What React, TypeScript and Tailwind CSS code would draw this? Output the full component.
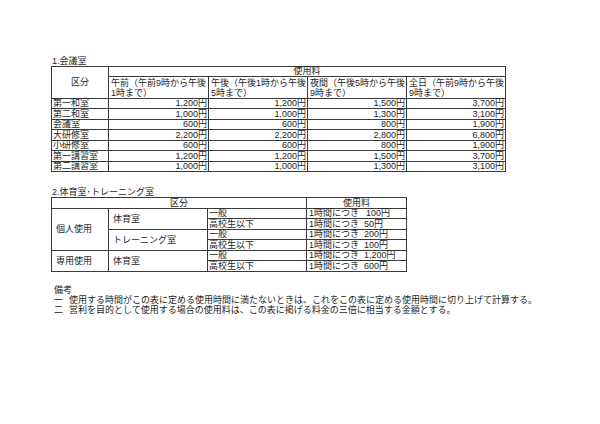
import React from "react";

const rows1 = [
  ["第一和室", "1,200円", "1,200円", "1,500円", "3,700円"],
  ["第二和室", "1,000円", "1,000円", "1,300円", "3,100円"],
  ["会議室", "600円", "600円", "800円", "1,900円"],
  ["大研修室", "2,200円", "2,200円", "2,800円", "6,800円"],
  ["小研修室", "600円", "600円", "800円", "1,900円"],
  ["第一講習室", "1,200円", "1,200円", "1,500円", "3,700円"],
  ["第二講習室", "1,000円", "1,000円", "1,300円", "3,100円"],
];
const rowH1 = ["h-[10px]", "h-[11px]", "h-[10px]", "h-[11px]", "h-[10px]", "h-[11px]", "h-[10px]"];

const heads = [
  ["午前（午前9時から午後", "1時まで）"],
  ["午後（午後1時から午後", "5時まで）"],
  ["夜間（午後5時から午後", "9時まで）"],
  ["全日（午前9時から午後", "9時まで）"],
];

const cell = "border border-[#3a3a3a] p-0 align-middle leading-[9px]";

export default function App() {
  return (
    <div
      className="w-[600px] h-[424px] bg-white text-[#1e1e1e] text-[9px] leading-[10px] pl-[51px] pt-[56px] flex flex-col"
      style={{ fontFamily: '"Liberation Sans", "Noto Sans CJK JP", sans-serif' }}
    >
      <div className="h-[10px] pl-[1px] whitespace-nowrap">1.会議室</div>
      <table className="border-collapse table-fixed w-[454px]">
        <colgroup>
          <col className="w-[57px]" />
          <col className="w-[100px]" />
          <col className="w-[99px]" />
          <col className="w-[99px]" />
          <col className="w-[99px]" />
        </colgroup>
        <tbody>
          <tr className="h-[10px]">
            <td rowSpan={2} className={`${cell} text-center`}>区分</td>
            <td colSpan={4} className={`${cell} text-center`}>使用料</td>
          </tr>
          <tr className="h-[22px]">
            {heads.map((h, i) => (
              <td key={i} className={`${cell} leading-[10px] pl-[2px] whitespace-nowrap`}>
                {h[0]}
                <br />
                {h[1]}
              </td>
            ))}
          </tr>
          {rows1.map((r, i) => (
            <tr key={i} className={rowH1[i]}>
              <td className={`${cell} pl-[1px] whitespace-nowrap`}>{r[0]}</td>
              {r.slice(1).map((v, j) => (
                <td key={j} className={`${cell} text-right pr-[1px]`}>{v}</td>
              ))}
            </tr>
          ))}
        </tbody>
      </table>

      <div className="h-[10px] pl-[1px] mt-[15px] whitespace-nowrap">2.体育室･トレーニング室</div>
      <table className="border-collapse table-fixed w-[355px]">
        <colgroup>
          <col className="w-[57px]" />
          <col className="w-[99px]" />
          <col className="w-[99px]" />
          <col className="w-[100px]" />
        </colgroup>
        <tbody>
          <tr className="h-[11px]">
            <td colSpan={3} className={`${cell} text-center`}>区分</td>
            <td className={`${cell} text-center`}>使用料</td>
          </tr>
          <tr className="h-[10px]">
            <td rowSpan={4} className={`${cell} pl-[4px]`}>個人使用</td>
            <td rowSpan={2} className={`${cell} pl-[4px]`}>体育室</td>
            <td className={`${cell} pl-[1px]`}>一般</td>
            <td className={`${cell} pl-[2px] whitespace-nowrap`}>1時間につき<span className="ml-[7px]">100円</span></td>
          </tr>
          <tr className="h-[11px]">
            <td className={`${cell} pl-[1px]`}>高校生以下</td>
            <td className={`${cell} pl-[2px] whitespace-nowrap`}>1時間につき<span className="ml-[5px]">50円</span></td>
          </tr>
          <tr className="h-[10px]">
            <td rowSpan={2} className={`${cell} pl-[4px] whitespace-nowrap`}>トレーニング室</td>
            <td className={`${cell} pl-[1px]`}>一般</td>
            <td className={`${cell} pl-[2px] whitespace-nowrap`}>1時間につき<span className="ml-[5px]">200円</span></td>
          </tr>
          <tr className="h-[11px]">
            <td className={`${cell} pl-[1px]`}>高校生以下</td>
            <td className={`${cell} pl-[2px] whitespace-nowrap`}>1時間につき<span className="ml-[5px]">100円</span></td>
          </tr>
          <tr className="h-[10px]">
            <td rowSpan={2} className={`${cell} pl-[4px]`}>専用使用</td>
            <td rowSpan={2} className={`${cell} pl-[4px]`}>体育室</td>
            <td className={`${cell} pl-[1px]`}>一般</td>
            <td className={`${cell} pl-[2px] whitespace-nowrap`}>1時間につき<span className="ml-[5px]">1,200円</span></td>
          </tr>
          <tr className="h-[11px]">
            <td className={`${cell} pl-[1px]`}>高校生以下</td>
            <td className={`${cell} pl-[2px] whitespace-nowrap`}>1時間につき<span className="ml-[5px]">600円</span></td>
          </tr>
        </tbody>
      </table>

      <div className="mt-[13px] pl-[3px] flex flex-col whitespace-nowrap">
        <div className="h-[10px]">備考</div>
        <div className="h-[10px] flex">
          <span className="w-[15px]">一</span>
          <span>使用する時間がこの表に定める使用時間に満たないときは、これをこの表に定める使用時間に切り上げて計算する。</span>
        </div>
        <div className="h-[10px] flex">
          <span className="w-[15px]">二</span>
          <span>営利を目的として使用する場合の使用料は、この表に掲げる料金の三倍に相当する金額とする。</span>
        </div>
      </div>
    </div>
  );
}
